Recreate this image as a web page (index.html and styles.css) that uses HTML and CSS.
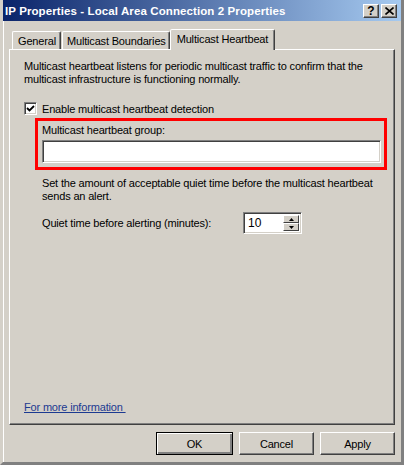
FILE: index.html
```html
<!DOCTYPE html>
<html>
<head>
<meta charset="utf-8">
<link rel="stylesheet" href="styles.css">
</head>
<body>
<div class="window">
  <div class="titlebar">
    <span class="title">IP Properties - Local Area Connection 2 Properties</span>
    <div class="ctrls">
      <span class="cbtn">?</span>
      <span class="cbtn">
        <svg width="9" height="8" viewBox="0 0 9 8"><path d="M0.5 0.5 L8.5 7.5 M8.5 0.5 L0.5 7.5" stroke="#000" stroke-width="1.6"/></svg>
      </span>
    </div>
  </div>
  <div class="content">
    <div class="tabs">
      <span class="tab">General</span>
      <span class="tab">Multicast Boundaries</span>
      <span class="tab active">Multicast Heartbeat</span>
    </div>
    <div class="panel">
      <p class="desc">Multicast heartbeat listens for periodic multicast traffic to confirm that the multicast infrastructure is functioning normally.</p>
      <label class="check">
        <span class="box"><svg width="9" height="9" viewBox="0 0 9 9"><path d="M1 4 L3.5 6.5 L8 2" fill="none" stroke="#000" stroke-width="1.8"/></svg></span>
        <span>Enable multicast heartbeat detection</span>
      </label>
      <div class="group">
        <div class="glabel">Multicast heartbeat group:</div>
        <div class="field"></div>
      </div>
      <p class="quiet-desc">Set the amount of acceptable quiet time before the multicast heartbeat sends an alert.</p>
      <div class="quiet">
        <span class="qlabel">Quiet time before alerting (minutes):</span>
        <div class="spin">
          <span class="spinval">10</span>
          <div class="arrows">
            <span class="arr"><svg width="5" height="3" viewBox="0 0 5 3"><path d="M2.5 0 L5 3 L0 3 Z" fill="#000"/></svg></span>
            <span class="arr"><svg width="5" height="3" viewBox="0 0 5 3"><path d="M0 0 L5 0 L2.5 3 Z" fill="#000"/></svg></span>
          </div>
        </div>
      </div>
      <div class="spacer"></div>
      <a class="link">For more information&nbsp;</a>
    </div>
    <div class="buttons">
      <span class="btn default">OK</span>
      <span class="btn">Cancel</span>
      <span class="btn">Apply</span>
    </div>
  </div>
</div>
</body>
</html>
```
FILE: styles.css
```css
* { box-sizing: border-box; }
html, body { margin: 0; padding: 0; }
body {
  width: 404px;
  height: 465px;
  background: #d4d0c8;
  font-family: "Liberation Sans", Arial, sans-serif;
  font-size: 11px;
  letter-spacing: -0.17px;
  color: #000;
  overflow: hidden;
}
.window {
  width: 404px;
  height: 465px;
  display: flex;
  flex-direction: column;
  background: #d4d0c8;
  border-left: 3px solid #d4d0c8;
  border-right: 3px solid #808080;
  border-bottom: 3px solid #808080;
  box-shadow: inset 1px 0 0 #fff;
}
.titlebar {
  height: 21px;
  flex: none;
  display: flex;
  align-items: center;
  justify-content: space-between;
  padding: 0 4px 0 2px;
  background: linear-gradient(to right, #0a246a, #a6caf0);
}
.title {
  color: #fff;
  font-weight: bold;
  font-size: 11.5px;
  letter-spacing: 0.1px;
}
.ctrls { display: flex; gap: 2px; }
.cbtn {
  width: 16px;
  height: 14px;
  background: #d4d0c8;
  border: 1px solid;
  border-color: #fff #404040 #404040 #fff;
  box-shadow: inset -1px -1px 0 #808080;
  display: flex;
  align-items: center;
  justify-content: center;
  font-weight: bold;
  font-size: 12px;
  line-height: 1;
  letter-spacing: 0;
}
.content {
  flex: 1;
  display: flex;
  flex-direction: column;
  padding: 8px 6px 0 6px;
}
.tabs {
  display: flex;
  align-items: flex-end;
  padding-left: 3px;
  height: 20px;
  position: relative;
  z-index: 1;
}
.tab {
  height: 18px;
  padding: 0 4px 0 5px;
  display: flex;
  align-items: center;
  border: 1px solid;
  border-bottom: none;
  border-color: #fff #404040 transparent #fff;
  box-shadow: inset -1px 0 0 #808080;
  border-radius: 2px 2px 0 0;
  margin-top: 2px;
  white-space: nowrap;
}
.tab + .tab { margin-left: 1px; padding: 0 3px 0 4px; }
.tab.active {
  height: 21px;
  margin-bottom: -1px;
  margin-left: 0;
  padding: 0 6px 3px 6px;
  background: #d4d0c8;
}
.panel {
  flex: none;
  height: 376px;
  display: flex;
  flex-direction: column;
  border: 1px solid;
  border-color: #fff #404040 #404040 #fff;
  box-shadow: inset -1px -1px 0 #808080;
  padding: 10px 14px 11px 14px;
}
.desc { margin: 0; line-height: 13px; width: 350px; }
.check {
  display: flex;
  align-items: center;
  gap: 5px;
  margin-top: 16px;
  height: 13px;
}
.box {
  width: 13px;
  height: 13px;
  background: #fff;
  border: 1px solid;
  border-color: #808080 #fff #fff #808080;
  box-shadow: inset 1px 1px 0 #404040, inset -1px -1px 0 #d4d0c8;
  display: flex;
  align-items: center;
  justify-content: center;
}
.group {
  margin: 3px 0 0 11px;
  width: 352px;
  border: 3px solid #ff0000;
  padding: 3px 4px 4px 4px;
}
.glabel { line-height: 13px; height: 16px; }
.field {
  height: 23px;
  width: 339px;
  background: #fff;
  border: 1px solid;
  border-color: #808080 #fff #fff #808080;
  box-shadow: inset 1px 1px 0 #404040, inset -1px -1px 0 #d4d0c8;
}
.quiet-desc {
  margin: 7px 0 0 18px;
  line-height: 13px;
  width: 340px;
}
.quiet {
  display: flex;
  align-items: center;
  margin: 9px 0 0 18px;
}
.qlabel { width: 201px; }
.spin {
  display: flex;
  width: 59px;
  height: 22px;
  background: #fff;
  border: 1px solid;
  border-color: #808080 #fff #fff #808080;
  box-shadow: inset 1px 1px 0 #404040, inset -1px -1px 0 #d4d0c8;
  padding: 2px 2px 2px 4px;
}
.spinval { flex: 1; font-size: 12px; line-height: 16px; letter-spacing: 0; }
.arrows { display: flex; flex-direction: column; width: 16px; }
.arr {
  flex: 1;
  background: #d4d0c8;
  border: 1px solid;
  border-color: #fff #404040 #404040 #fff;
  display: flex;
  align-items: center;
  justify-content: center;
}
.spacer { flex: 1; }
.link {
  color: #1c3a91;
  text-decoration: underline;
  align-self: flex-start;
}
.buttons {
  display: flex;
  justify-content: flex-end;
  gap: 6px;
  padding-top: 7px;
}
.btn {
  width: 75px;
  height: 23px;
  display: flex;
  align-items: center;
  justify-content: center;
  border: 1px solid;
  border-color: #fff #404040 #404040 #fff;
  box-shadow: inset -1px -1px 0 #808080;
}
.btn.default {
  width: 77px;
  border: 1px solid #000;
  box-shadow: inset 1px 1px 0 #fff, inset -2px -2px 0 #808080;
}
```
